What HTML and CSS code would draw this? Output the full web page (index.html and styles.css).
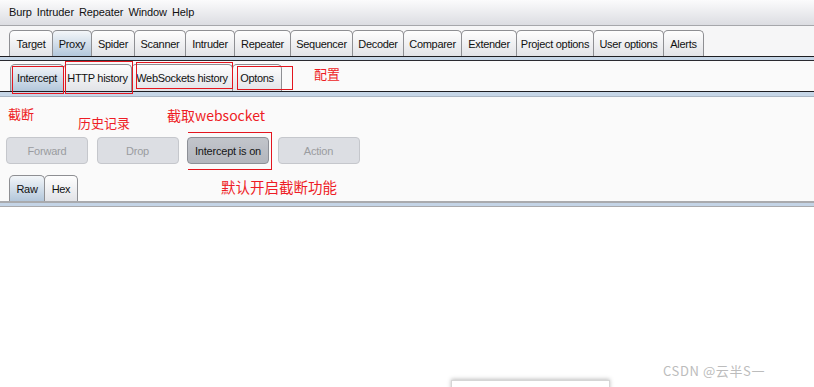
FILE: index.html
```html
<!DOCTYPE html>
<html lang="en">
<head>
    <meta charset="UTF-8">
    <title>Burp Suite - Proxy</title>
    <link rel="stylesheet" href="styles.css">
</head>
<body>
    <div class="window">
        <!-- Menu bar -->
        <div class="menubar">
            <span>Burp</span>
            <span>Intruder</span>
            <span>Repeater</span>
            <span>Window</span>
            <span>Help</span>
        </div>

        <!-- Main tool tabs -->
        <div class="tabs tabs-main">
            <div class="tab w43">Target</div>
            <div class="tab w39 selected">Proxy</div>
            <div class="tab w43">Spider</div>
            <div class="tab w51">Scanner</div>
            <div class="tab w49">Intruder</div>
            <div class="tab w56">Repeater</div>
            <div class="tab w62">Sequencer</div>
            <div class="tab w51">Decoder</div>
            <div class="tab w58">Comparer</div>
            <div class="tab w55">Extender</div>
            <div class="tab w77">Project options</div>
            <div class="tab w70">User options</div>
            <div class="tab w40">Alerts</div>
        </div>
        <div class="strip"></div>

        <!-- Proxy sub tabs -->
        <div class="tabs tabs-sub">
            <div class="tab w53 selected">Intercept</div>
            <div class="tab w68">HTTP history</div>
            <div class="tab w101">WebSockets history</div>
            <div class="tab w49">Optons</div>
        </div>
        <div class="strip strip-sub"></div>

        <!-- Intercept panel -->
        <div class="panel">
            <div class="actions">
                <button class="btn" disabled>Forward</button>
                <button class="btn" disabled>Drop</button>
                <button class="btn btn-on">Intercept is on</button>
                <button class="btn" disabled>Action</button>
            </div>
            <div class="tabs tabs-view">
                <div class="tab w35 selected">Raw</div>
                <div class="tab w34">Hex</div>
            </div>
        </div>
        <div class="view-strip"></div>
        <div class="editor"></div>

        <!-- annotations drawn over the screenshot -->
        <div class="mark mark-intercept"></div>
        <div class="mark mark-history"></div>
        <div class="mark mark-ws"></div>
        <div class="mark mark-options"></div>
        <div class="mark mark-on"></div>

        <div class="note note-config">配置</div>
        <div class="note note-cut">截断</div>
        <div class="note note-history">历史记录</div>
        <div class="note note-ws">截取websocket</div>
        <div class="note note-default">默认开启截断功能</div>

        <div class="popup"></div>
        <div class="watermark">CSDN @云半S一</div>
    </div>
</body>
</html>
```

FILE: styles.css
```css
/* Reset */
* {
    margin: 0;
    padding: 0;
    box-sizing: border-box;
}

body {
    font-family: 'Liberation Sans', Arial, sans-serif;
    font-size: 11px;
    color: #111;
    background: #fff;
}

.window {
    position: relative;
    width: 814px;
    height: 387px;
    overflow: hidden;
    background: #fafafa;
}

/* Menu bar */
.menubar {
    display: flex;
    align-items: center;
    gap: 5px;
    height: 26px;
    padding: 0 0 2px 9px;
    background: linear-gradient(#fbfbfc, #dcdde2);
    border-bottom: 1px solid #a6a7ab;
    letter-spacing: -0.1px;
}

/* Tabs */
.tabs {
    display: flex;
    align-items: flex-end;
}

.tab {
    display: flex;
    align-items: center;
    justify-content: center;
    height: 26px;
    margin-right: -1px;
    border: 1px solid #8e8f93;
    border-bottom: none;
    border-radius: 5px 5px 0 0;
    background: linear-gradient(#fefefe, #e2e3e7);
    letter-spacing: -0.3px;
    white-space: nowrap;
}

.tab.selected {
    background: linear-gradient(#f3f6f9, #b3c7db);
}

.tabs-main {
    height: 30px;
    padding-left: 9px;
    background: #f6f6f7;
}

.tabs-sub {
    height: 30px;
    padding-left: 10px;
}

.tabs-sub .tab {
    height: 27px;
}

.tabs-view {
    padding-left: 9px;
}

.w34 { width: 34px; }
.w35 { width: 36px; }
.w39 { width: 40px; }
.w40 { width: 41px; }
.w43 { width: 44px; }
.w49 { width: 50px; }
.w51 { width: 52px; }
.w53 { width: 54px; }
.w55 { width: 56px; }
.w56 { width: 57px; }
.w58 { width: 59px; }
.w62 { width: 63px; }
.w68 { width: 69px; }
.w70 { width: 71px; }
.w77 { width: 78px; }
.w101 { width: 102px; }

.strip {
    height: 5px;
    border-top: 1px solid #1e1e22;
    border-bottom: 1px solid #2a2a30;
    background: #c6d6e7;
}

.strip-sub {
    height: 6px;
    border-bottom: 1px solid #a9b5c3;
}

/* Intercept panel */
.panel {
    height: 104px;
    padding-top: 40px;
}

.actions {
    display: flex;
    gap: 8.5px;
    padding-left: 6px;
    margin-bottom: 11px;
}

.btn {
    width: 82px;
    height: 27px;
    border: 1px solid #c5c7cc;
    border-radius: 4px;
    background: #dcdee3;
    font-family: inherit;
    font-size: 11px;
    color: #9a9ca0;
    letter-spacing: -0.2px;
}

.btn-on {
    border-color: #8d9097;
    background: linear-gradient(#c2c5cb, #b3b6bd);
    color: #151515;
}

.view-strip {
    height: 6px;
    border-top: 2px solid #a9aaad;
    border-bottom: 1px solid #a9aaad;
    background: #c4d4e6;
}

.editor {
    height: 180px;
    background: #fff;
}

/* Red annotation boxes */
.mark {
    position: absolute;
    border: 1px solid #e3161f;
}

.mark-intercept { left: 12px; top: 66px; width: 52px; height: 28px; }
.mark-history { left: 65px; top: 61px; width: 68px; height: 33px; }
.mark-ws { left: 136px; top: 62px; width: 97px; height: 27px; }
.mark-options { left: 237px; top: 66px; width: 56px; height: 24px; }
.mark-on {
    left: 188px;
    top: 132px;
    width: 84px;
    height: 38px;
    border-left: none;
}

/* Red annotation notes */
.note {
    position: absolute;
    font-family: 'Noto Sans CJK SC', 'Liberation Sans', sans-serif;
    font-size: 13px;
    line-height: 1;
    color: #ee1c25;
}

.note-config { left: 314px; top: 67px; }
.note-cut { left: 8px; top: 107px; }
.note-history { left: 78px; top: 116px; }
.note-ws { left: 167px; top: 108px; font-size: 14px; }
.note-default { left: 221px; top: 180px; font-size: 14.5px; }

/* bottom decorations */
.popup {
    position: absolute;
    left: 451px;
    top: 380px;
    width: 159px;
    height: 20px;
    background: #fff;
    border: 1px solid #d6d6d6;
    box-shadow: 0 -1px 4px rgba(0, 0, 0, 0.25);
}

.watermark {
    position: absolute;
    left: 663px;
    top: 364px;
    font-family: 'Noto Sans CJK SC', 'Liberation Sans', sans-serif;
    font-size: 13px;
    line-height: 1;
    letter-spacing: 0.6px;
    color: #bcbcbc;
}
```
